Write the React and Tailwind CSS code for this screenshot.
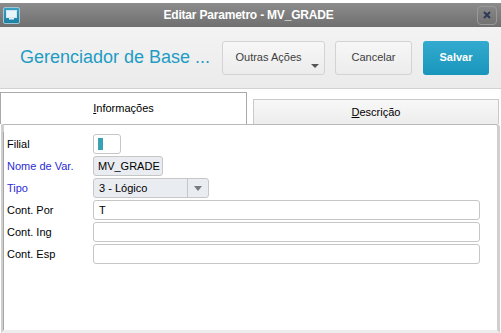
import React from 'react'

const font = { fontFamily: '"Liberation Sans", Arial, sans-serif' }

function Field({ label, blue, children }) {
  return (
    <div className="flex items-center h-[22px]">
      <div className={`w-[89px] pl-[3px] text-[11px] ${blue ? 'text-[#2b2bd6]' : 'text-black'}`}>{label}</div>
      {children}
    </div>
  )
}

function TextBox({ value, w = 'w-[387px]' }) {
  return (
    <div className={`${w} h-[20px] rounded-[3px] border border-[#c6c6c6] bg-white flex items-center px-[5px] text-[11px] text-black`}>
      {value}
    </div>
  )
}

export default function App() {
  return (
    <div className="w-[501px] h-[333px] overflow-hidden bg-white flex flex-col" style={font}>
      <div className="h-[3px] bg-white" />

      {/* title bar */}
      <div className="h-[24px] flex items-center px-[3px] bg-gradient-to-b from-[#8c8c8c] to-[#6f6f6f]">
        <div className="w-[17px] h-[17px] rounded-[2px] border border-[#9fc7d3] bg-gradient-to-b from-[#3aa2c4] to-[#1c7fa4] flex items-center justify-center">
          <svg width="11" height="10" viewBox="0 0 11 10">
            <rect x="0.5" y="0.5" width="10" height="7" fill="#e8f4f8" stroke="#cfe6ee" />
            <rect x="3" y="8" width="5" height="1.5" fill="#e8f4f8" />
          </svg>
        </div>
        <div className="flex-1 text-center text-white text-[12px] font-bold tracking-[-0.2px]">Editar Parametro - MV_GRADE</div>
        <div className="w-[20px] h-[19px] mr-[1px] rounded-[4px] border border-[#9a9a9a] flex items-center justify-center">
          <svg width="8" height="8" viewBox="0 0 8 8">
            <path d="M1 1 L7 7 M7 1 L1 7" stroke="#2e3a55" strokeWidth="2" />
          </svg>
        </div>
      </div>

      {/* header */}
      <div className="h-[62px] flex items-center bg-gradient-to-b from-[#f3f3f3] to-[#ebebeb] border-b border-[#d2d2d2]">
        <div className="pl-[20px] w-[222px] text-[18px] text-[#1e9cc5]">Gerenciador de Base ...</div>
        <div className="relative w-[103px] h-[34px] rounded-[3px] border border-[#d3d3d3] bg-gradient-to-b from-[#f7f7f7] to-[#ececec] flex items-center justify-center pr-[10px] text-[11px] text-[#3d3d3d]">
          Outras Ações
          <svg className="absolute right-[5px] bottom-[6px]" width="8" height="4" viewBox="0 0 8 4">
            <path d="M0 0 L8 0 L4 4 Z" fill="#555" />
          </svg>
        </div>
        <div className="ml-[10px] w-[77px] h-[34px] rounded-[3px] border border-[#d3d3d3] bg-gradient-to-b from-[#f7f7f7] to-[#ececec] flex items-center justify-center text-[11px] text-[#3d3d3d]">
          Cancelar
        </div>
        <div className="ml-[11px] w-[66px] h-[34px] rounded-[3px] bg-gradient-to-b from-[#33abd0] to-[#1895bb] flex items-center justify-center text-[11px] font-bold text-white">
          Salvar
        </div>
      </div>

      {/* tabs */}
      <div className="h-[35px] pt-[3px] flex items-end">
        <div className="w-[247px] h-[32px] border border-b-0 border-[#a9a9a9] bg-white flex items-center justify-center text-[11px] text-black">
          <span><span className="underline">I</span>nformações</span>
        </div>
        <div className="ml-[6px] w-[246px] h-[25px] border border-b-0 border-[#c9c9c9] bg-gradient-to-b from-[#f8f8f8] to-[#ededed] flex items-center justify-center text-[11px] text-black">
          <span><span className="underline">D</span>escrição</span>
        </div>
      </div>

      {/* panel */}
      <div className="flex-1 mx-[1px] border-l-[3px] border-l-[#cfcfcf] border-r-[3px] border-r-[#cfcfcf] border-t border-t-[#b9b9b9] border-b-[3px] border-b-[#ededed] rounded-tr-[4px] bg-white pt-[7px] flex flex-col">
        <div className="border-l border-[#a6a6a6] -ml-[1px] flex-1 pt-[1px]">
          <Field label="Filial">
            <div className="w-[28px] h-[20px] rounded-[3px] border border-[#c6c6c6] bg-white flex items-center pl-[4px]">
              <div className="w-[5px] h-[12px] bg-[#3aa0b4]" />
            </div>
          </Field>
          <Field label="Nome de Var." blue>
            <div className="w-[70px] h-[20px] rounded-[3px] border border-[#c6c6c6] bg-[#e9ecf0] flex items-center px-[4px] text-[11px] text-black">
              MV_GRADE
            </div>
          </Field>
          <Field label="Tipo" blue>
            <div className="w-[116px] h-[20px] rounded-[3px] border border-[#c6c6c6] bg-[#e9ecf0] flex items-center text-[11px] text-black">
              <div className="flex-1 px-[5px]">3 - Lógico</div>
              <div className="w-[21px] h-full border-l border-[#c6c6c6] flex items-center justify-center">
                <svg width="8" height="5" viewBox="0 0 8 5">
                  <path d="M0 0 L8 0 L4 5 Z" fill="#7a7a7a" />
                </svg>
              </div>
            </div>
          </Field>
          <Field label="Cont. Por">
            <TextBox value="T" />
          </Field>
          <Field label="Cont. Ing">
            <TextBox value="" />
          </Field>
          <Field label="Cont. Esp">
            <TextBox value="" />
          </Field>
        </div>
      </div>
    </div>
  )
}
